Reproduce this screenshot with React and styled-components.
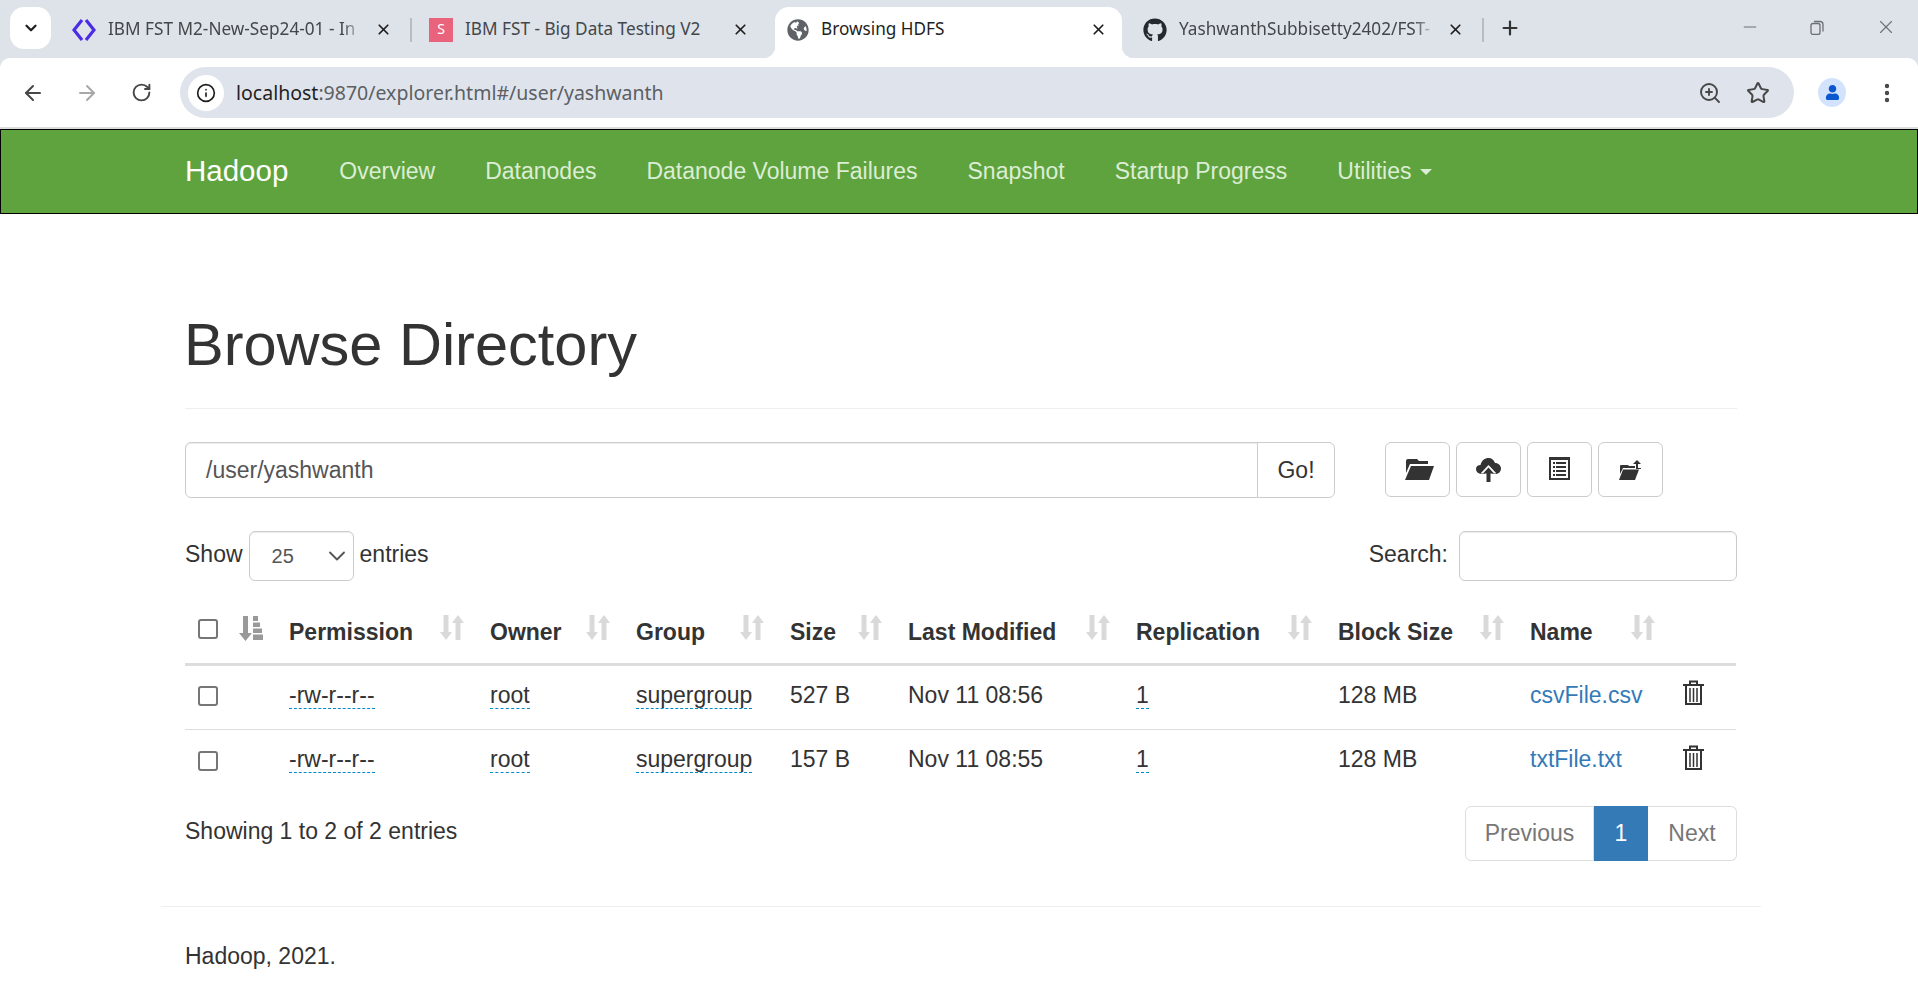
import React from "react";
import styled, { createGlobalStyle } from "styled-components";
import { ArrowLeft, ArrowRight, RotateCw, Info, ZoomIn, Star, X, Plus, Minus, ChevronDown, EllipsisVertical } from "lucide-react";
import { FaGithub, FaGlobeAmericas, FaUser } from "react-icons/fa";

const Global = createGlobalStyle`
  html, body { margin: 0; padding: 0; background: #fff; overflow: hidden; }
  body { font-family: "Liberation Sans", Arial, sans-serif; font-size: 23px; line-height: 1.43; color: #333; }
  * { box-sizing: border-box; }
`;

/* browser chrome */
const TabStrip = styled.div`
  display: flex;
  align-items: flex-start;
  height: 66px;
  padding: 7px 0 0 10px;
  background: #dee3ea;
  font-family: "Noto Sans", sans-serif;
  font-size: 17.2px;
`;

const TabSearch = styled.div`
  display: flex;
  align-items: center;
  justify-content: center;
  width: 41px;
  height: 42px;
  margin-right: 17px;
  background: #fff;
  border-radius: 14px;
  color: #1f1f1f;
`;

const Tab = styled.div`
  position: relative;
  display: flex;
  align-items: center;
  width: ${(p) => p.$width}px;
  height: 51px;
  margin-left: ${(p) => p.$gap || 0}px;
  padding: 0 ${(p) => p.$end}px 6px ${(p) => p.$pad}px;
  gap: 12px;
  color: ${(p) => (p.$active ? "#1f1f1f" : "#44474a")};
  background: ${(p) => (p.$active ? "#fff" : "transparent")};
  border-radius: 14px 14px 0 0;
  ${(p) =>
    p.$divider &&
    `&::after {
      content: "";
      position: absolute;
      right: 0;
      top: 11px;
      width: 2px;
      height: 24px;
      background: #b9bcc1;
    }`}
  ${(p) =>
    p.$active &&
    `z-index: 1;
    &::before, &::after {
      content: "";
      position: absolute;
      bottom: 0;
      width: 12px;
      height: 12px;
    }
    &::before { left: -12px; background: radial-gradient(circle at 0 0, #dee3ea 12px, #fff 12.5px); }
    &::after { right: -12px; background: radial-gradient(circle at 100% 0, #dee3ea 12px, #fff 12.5px); }`}
`;

const TabTitle = styled.span`
  flex: 1;
  overflow: hidden;
  white-space: nowrap;
  ${(p) =>
    p.$fade &&
    `-webkit-mask-image: linear-gradient(to right, #000 92%, transparent 100%);
     mask-image: linear-gradient(to right, #000 92%, transparent 100%);`}
`;

const TabClose = styled(X)`
  flex: none;
  width: 17px;
  height: 17px;
  color: #1f1f1f;
  stroke-width: 2.4;
`;

const NewTab = styled.div`
  display: flex;
  align-items: center;
  height: 42px;
  margin-left: 15px;
  color: #333;
`;

const WindowControls = styled.div`
  display: flex;
  align-items: center;
  height: 26px;
  margin-left: auto;
  margin-top: 7px;
  padding-right: 21px;
  gap: 50px;
  color: #6b6e72;
`;

const ToolBar = styled.div`
  position: relative;
  display: flex;
  align-items: center;
  height: 71px;
  margin-top: -8px;
  padding-left: 21px;
  background: #fff;
  border-bottom: 2px solid #dadce0;
  border-radius: 10px 10px 0 0;
  color: #474747;
`;

const NavIcons = styled.div`
  display: flex;
  align-items: center;
  gap: 30px;
  width: 159px;
`;

const Reload = styled(RotateCw)`
  margin-left: 2px;
`;

const AddressBar = styled.div`
  display: flex;
  align-items: center;
  width: 1614px;
  height: 51px;
  padding: 0 24px 0 8px;
  background: #dfe4ec;
  border-radius: 26px;
`;

const InfoBadge = styled.div`
  display: flex;
  align-items: center;
  justify-content: center;
  width: 36px;
  height: 36px;
  margin-right: 12px;
  background: #fff;
  border-radius: 50%;
  color: #1f1f1f;
`;

const Url = styled.span`
  flex: 1;
  font-family: "Noto Sans", sans-serif;
  font-size: 19.5px;
  color: #5c5f63;
  b { font-weight: 400; color: #1f1f1f; }
`;

const AddressActions = styled.div`
  display: flex;
  align-items: center;
  gap: 24px;
`;

const ProfileArea = styled.div`
  display: flex;
  align-items: center;
  margin-left: 24px;
  gap: 29px;
`;

const Avatar = styled.div`
  display: flex;
  align-items: center;
  justify-content: center;
  width: 28px;
  height: 29px;
  background: #d3e3fd;
  border-radius: 50%;
  color: #0b57d0;
`;

/* hadoop page */
const NavBar = styled.nav`
  display: flex;
  align-items: center;
  height: 85px;
  padding-left: 184px;
  background: #5fa33e;
  border: 1px solid #000;
`;

const Brand = styled.a`
  font-size: 29.5px;
  color: #fff;
  margin-right: 26px;
`;

const NavLink = styled.a`
  display: flex;
  align-items: center;
  padding: 0 25px;
  color: #dcedd5;
  white-space: nowrap;
`;

const Caret = styled.span`
  display: inline-block;
  margin-left: 9px;
  border-top: 6px solid #dcedd5;
  border-left: 6px solid transparent;
  border-right: 6px solid transparent;
`;

const Container = styled.main`
  width: 1600px;
  margin-left: 161px;
`;

const Content = styled.div`
  padding: 0 24px;
`;

const PageHeader = styled.div`
  height: 102px;
  margin-top: 93px;
  border-bottom: 1px solid #eee;
  margin-bottom: 33px;
`;

const Title = styled.h1`
  margin: 0 0 0 -1px;
  font-size: 59.5px;
  font-weight: 400;
  line-height: 76px;
  color: #333;
`;

const PathRow = styled.div`
  display: flex;
  align-items: flex-start;
  height: 56px;
`;

const PathInput = styled.div`
  display: flex;
  align-items: center;
  width: 1073px;
  height: 56px;
  padding: 0 20px;
  border: 1px solid #ccc;
  border-radius: 6px 0 0 6px;
  box-shadow: inset 0 1px 1px rgba(0, 0, 0, 0.075);
  color: #555;
`;

const GoButton = styled.div`
  display: flex;
  align-items: center;
  justify-content: center;
  width: 78px;
  height: 56px;
  margin-left: -1px;
  border: 1px solid #ccc;
  border-radius: 0 6px 6px 0;
`;

const ActionGroup = styled.div`
  display: flex;
  gap: 6px;
  margin-left: 50px;
`;

const IconButton = styled.div`
  display: flex;
  align-items: center;
  justify-content: center;
  width: 65px;
  height: 55px;
  border: 1px solid #ccc;
  border-radius: 6px;
  color: #333;
`;

const FilterRow = styled.div`
  display: flex;
  align-items: center;
  justify-content: space-between;
  height: 50px;
  margin-top: 33px;
`;

const Label = styled.label`
  display: flex;
  align-items: center;
  gap: 6px;
  span { margin-top: -3px; }
`;

const SelectBox = styled.div`
  display: flex;
  align-items: center;
  justify-content: space-between;
  width: 105px;
  height: 50px;
  padding: 0 2px 0 22px;
  border: 1px solid #ccc;
  border-radius: 6px;
  font-size: 20px;
  color: #555;
  box-shadow: inset 0 1px 1px rgba(0, 0, 0, 0.075);
`;

const SearchInput = styled.div`
  width: 278px;
  height: 50px;
  margin-left: 5px;
  border: 1px solid #ccc;
  border-radius: 6px;
  box-shadow: inset 0 1px 1px rgba(0, 0, 0, 0.075);
`;

const Table = styled.table`
  width: 1551px;
  margin-top: 20px;
  border-collapse: collapse;
  table-layout: fixed;
`;

const Th = styled.th`
  height: 63px;
  padding: 0 ${(p) => (p.$sort ? 6 : 12)}px;
  text-align: left;
  vertical-align: middle;
  border-bottom: 3px solid #ddd;
`;

const HeadCell = styled.div`
  display: flex;
  align-items: flex-start;
  justify-content: space-between;
  padding-right: 2px;
  height: 34px;
  span { padding-top: 2px; line-height: 30px; white-space: nowrap; }
`;

const SortMark = styled.svg`
  display: block;
  flex: none;
  width: 24px;
  height: 25px;
  color: ${(p) => (p.$on ? "#999" : "#d9d9d9")};
  margin-bottom: ${(p) => (p.$on ? 6 : 0)}px;
`;

const Td = styled.td`
  height: 65px;
  padding: 0 12px ${(p) => (p.$icon ? 0 : 4)}px ${(p) => (p.$icon ? 14 : 12)}px;
  border-bottom: ${(p) => (p.$last ? "none" : "1px solid #ddd")};
  white-space: nowrap;
`;

const Check = styled.span`
  display: block;
  width: 20px;
  height: 20px;
  margin: ${(p) => (p.$head ? "0 0 6px 1px" : "2px 0 0 1px")};
  border: 2px solid #767676;
  border-radius: 3px;
  background: #fff;
`;

const Editable = styled.a`
  color: #333;
  border-bottom: 1px dashed #0088cc;
`;

const FileLink = styled.a`
  color: #337ab7;
`;

const TableFooter = styled.div`
  display: flex;
  align-items: flex-start;
  justify-content: space-between;
  margin-top: 12px;
  height: 55px;
`;

const EntryCount = styled.div`
  padding-top: 9px;
`;

const Pager = styled.div`
  display: flex;
  height: 55px;
`;

const PageButton = styled.div`
  display: flex;
  align-items: center;
  justify-content: center;
  width: ${(p) => p.$w}px;
  border: 1px solid ${(p) => (p.$active ? "#337ab7" : "#ddd")};
  border-left-width: ${(p) => (p.$first || p.$active ? 1 : 0)}px;
  border-radius: ${(p) => (p.$first ? "6px 0 0 6px" : p.$end ? "0 6px 6px 0" : "0")};
  background: ${(p) => (p.$active ? "#337ab7" : "#fff")};
  color: ${(p) => (p.$active ? "#fff" : "#777")};
`;

const Footer = styled.footer`
  margin-top: 45px;
  padding: 33px 24px 0;
  border-top: 1px solid #eee;
`;

const SortIcon = ({ on }) => (
  <SortMark $on={on} viewBox="0 0 24 25" fill="currentColor">
    {on ? (
      <>
        <path d="M4 0h5v17h4l-6.500 8L0 17h4z" />
        <path d="M14 0h5v5h-5zM14 6.500h7V11h-7zM14 12.500h9V17h-9zM14 18.500h10V24H14z" />
      </>
    ) : (
      <>
        <path d="M3.500 0h5v17H12l-6 8-6-8h3.500z" />
        <path d="M15.500 25h5V8H24l-6-8-6 8h3.500z" />
      </>
    )}
  </SortMark>
);

const FolderOpen = () => (
  <svg width="33" height="21" viewBox="-4 0 33 21" fill="currentColor">
    <path d="M3 0h9l2 2h9v3H5L1 14V2q0-2 2-2z" />
    <path d="M6 7h23l-5 14H0z" />
  </svg>
);

const CloudUp = () => (
  <svg width="25" height="24" viewBox="0 0 25 24" fill="currentColor">
    <path d="M6 16C2 16 0 13.500 0 11 0 8.500 2 7 4.500 7 5.500 2.500 9 0 12.500 0c3.500 0 5.500 2 6.500 5 3.500 0 6 2.500 6 5.500 0 3-2.500 5.500-5 5.500z" />
    <path d="M12.500 7l8 8.500h-4.500V24H9v-8.500H4.500z" fill="#fff" />
    <path d="M12.500 9.500l5.500 6h-3.500V24h-4v-8.500H7z" />
  </svg>
);

const ListAlt = () => (
  <svg width="21" height="25" viewBox="0 0 21 25" fill="currentColor">
    <path fillRule="evenodd" d="M0 0h21v23H0zM2 3v18h17V3z" />
    <path d="M4 5h2v2H4zM7 5h10v2H7zM4 9h2v2H4zM7 9h10v2H7zM4 13h2v2H4zM7 13h10v2H7zM4 17h2v2H4zM7 17h10v2H7z" />
  </svg>
);

const FolderUp = () => (
  <svg width="24" height="20" viewBox="0 0 24 20" fill="currentColor">
    <path d="M2 5h7l1 1h6v2H4L1 14V6q0-1 1-1z" />
    <path d="M4 9.500h16L16 20H0z" />
    <path d="M18 0l4 4h-3v4h3v1h-5V4h-3z" />
  </svg>
);

const Trash = () => (
  <svg width="21" height="25" viewBox="0 0 21 25" fill="none" stroke="#333" strokeWidth="2">
    <path d="M0 5h21M7 5V1.500h7V5" />
    <path d="M3 5v19h15V5" />
    <path d="M7 8v14M10.500 8v14M14 8v14" strokeWidth="1.500" />
  </svg>
);

const SpotLogo = () => (
  <svg width="24" height="24" viewBox="0 0 24 24" fill="none" stroke="#4b2be3" strokeWidth="3.200">
    <path d="M10 2L2 12l8 10M14 2l8 10-8 10" />
  </svg>
);

const SBadge = styled.div`
  display: flex;
  align-items: center;
  justify-content: center;
  flex: none;
  width: 24px;
  height: 24px;
  background: #e9637c;
  color: #fff;
  font-size: 14px;
`;

const RestoreIcon = () => (
  <svg width="15" height="15" viewBox="0 0 15 15" fill="none" stroke="currentColor" strokeWidth="1.300">
    <rect x="1" y="3.500" width="9" height="11" rx="2" />
    <path d="M4 1.500h6q3 0 3 3v7" />
  </svg>
);

const columns = [
  { width: 48, check: true },
  { width: 44, sort: true },
  { label: "Permission", width: 201 },
  { label: "Owner", width: 146 },
  { label: "Group", width: 154 },
  { label: "Size", width: 118 },
  { label: "Last Modified", width: 228 },
  { label: "Replication", width: 202 },
  { label: "Block Size", width: 192 },
  { label: "Name", width: 151 },
  { width: 67 },
];

const files = [
  { perm: "-rw-r--r--", owner: "root", group: "supergroup", size: "527 B", date: "Nov 11 08:56", rep: "1", block: "128 MB", name: "csvFile.csv" },
  { perm: "-rw-r--r--", owner: "root", group: "supergroup", size: "157 B", date: "Nov 11 08:55", rep: "1", block: "128 MB", name: "txtFile.txt" },
];

const links = ["Overview", "Datanodes", "Datanode Volume Failures", "Snapshot", "Startup Progress"];

export default function App() {
  return (
    <>
      <Global />
      <TabStrip>
        <TabSearch>
          <ChevronDown size={18} strokeWidth={3} />
        </TabSearch>
        <Tab $width={344} $pad={4} $end={20} $divider>
          <SpotLogo />
          <TabTitle $fade>IBM FST M2-New-Sep24-01 - In</TabTitle>
          <TabClose />
        </Tab>
        <Tab $width={360} $pad={17} $end={23}>
          <SBadge>S</SBadge>
          <TabTitle>IBM FST - Big Data Testing V2</TabTitle>
          <TabClose />
        </Tab>
        <Tab $width={347} $pad={12} $gap={3} $end={15} $active>
          <FaGlobeAmericas size={22} color="#5f6368" />
          <TabTitle>Browsing HDFS</TabTitle>
          <TabClose />
        </Tab>
        <Tab $width={361} $pad={20} $gap={1} $end={20} $divider>
          <FaGithub size={24} color="#24292f" />
          <TabTitle $fade>YashwanthSubbisetty2402/FST-</TabTitle>
          <TabClose />
        </Tab>
        <NewTab>
          <Plus size={22} strokeWidth={2.4} />
        </NewTab>
        <WindowControls>
          <Minus size={20} strokeWidth={1.2} />
          <RestoreIcon />
          <X size={22} strokeWidth={1.2} />
        </WindowControls>
      </TabStrip>
      <ToolBar>
        <NavIcons>
          <ArrowLeft size={24} strokeWidth={2} />
          <ArrowRight size={24} strokeWidth={2} color="#a8a8a8" />
          <Reload size={21} strokeWidth={2.2} />
        </NavIcons>
        <AddressBar>
          <InfoBadge>
            <Info size={20} strokeWidth={2} />
          </InfoBadge>
          <Url>
            <b>localhost</b>:9870/explorer.html#/user/yashwanth
          </Url>
          <AddressActions>
            <ZoomIn size={24} strokeWidth={1.9} />
            <Star size={24} strokeWidth={2} />
          </AddressActions>
        </AddressBar>
        <ProfileArea>
          <Avatar>
            <FaUser size={15} />
          </Avatar>
          <EllipsisVertical size={24} strokeWidth={2.4} />
        </ProfileArea>
      </ToolBar>

      <NavBar>
        <Brand>Hadoop</Brand>
        {links.map((l) => (
          <NavLink key={l}>{l}</NavLink>
        ))}
        <NavLink>
          Utilities <Caret />
        </NavLink>
      </NavBar>

      <Container>
        <Content>
          <PageHeader>
            <Title>Browse Directory</Title>
          </PageHeader>
          <PathRow>
            <PathInput>/user/yashwanth</PathInput>
            <GoButton>Go!</GoButton>
            <ActionGroup>
              <IconButton><FolderOpen /></IconButton>
              <IconButton><CloudUp /></IconButton>
              <IconButton><ListAlt /></IconButton>
              <IconButton><FolderUp /></IconButton>
            </ActionGroup>
          </PathRow>
          <FilterRow>
            <Label>
              <span>Show</span>
              <SelectBox>
                25
                <ChevronDown size={28} strokeWidth={1.6} />
              </SelectBox>
              <span>entries</span>
            </Label>
            <Label>
              <span>Search:</span>
              <SearchInput />
            </Label>
          </FilterRow>
          <Table>
            <colgroup>
              {columns.map((c, i) => (
                <col key={i} style={{ width: c.width }} />
              ))}
            </colgroup>
            <thead>
              <tr>
                {columns.map((c, i) => (
                  <Th key={i} $sort={c.sort}>
                    {c.check && <Check $head />}
                    {c.sort && <SortIcon on />}
                    {c.label && (
                      <HeadCell>
                        <span>{c.label}</span>
                        <SortIcon />
                      </HeadCell>
                    )}
                  </Th>
                ))}
              </tr>
            </thead>
            <tbody>
              {files.map((f, i) => {
                const last = i === files.length - 1;
                return (
                  <tr key={f.name}>
                    <Td $last={last}><Check /></Td>
                    <Td $last={last} />
                    <Td $last={last}><Editable>{f.perm}</Editable></Td>
                    <Td $last={last}><Editable>{f.owner}</Editable></Td>
                    <Td $last={last}><Editable>{f.group}</Editable></Td>
                    <Td $last={last}>{f.size}</Td>
                    <Td $last={last}>{f.date}</Td>
                    <Td $last={last}><Editable>{f.rep}</Editable></Td>
                    <Td $last={last}>{f.block}</Td>
                    <Td $last={last}><FileLink>{f.name}</FileLink></Td>
                    <Td $last={last} $icon><Trash /></Td>
                  </tr>
                );
              })}
            </tbody>
          </Table>
          <TableFooter>
            <EntryCount>Showing 1 to 2 of 2 entries</EntryCount>
            <Pager>
              <PageButton $w={129} $first>Previous</PageButton>
              <PageButton $w={54} $active>1</PageButton>
              <PageButton $w={89} $end>Next</PageButton>
            </Pager>
          </TableFooter>
        </Content>
        <Footer>Hadoop, 2021.</Footer>
      </Container>
    </>
  );
}
